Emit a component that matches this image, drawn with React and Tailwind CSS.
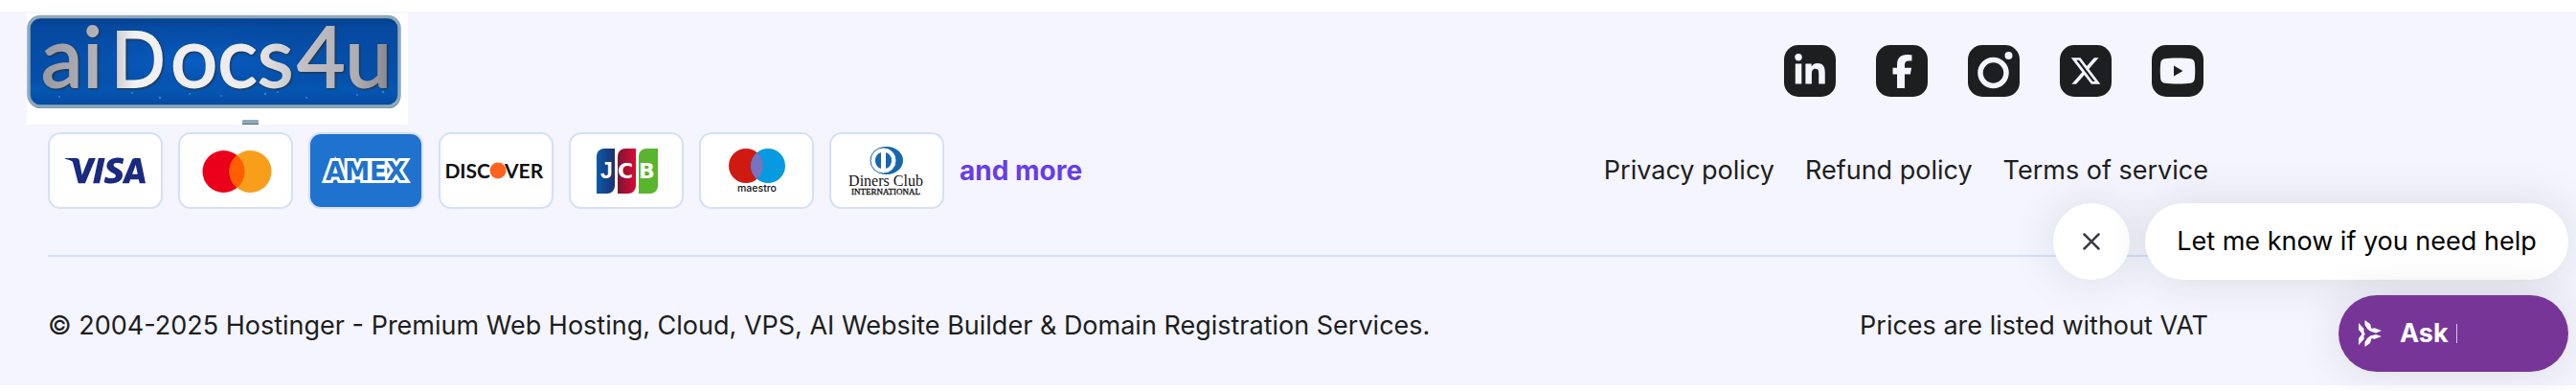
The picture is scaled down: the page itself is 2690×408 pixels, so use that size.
import React from "react";
import { FaLinkedinIn, FaFacebookF, FaXTwitter } from "react-icons/fa6";
import { SiVisa } from "react-icons/si";

function BrandLogo() {
  return (
    <svg viewBox="0 0 398 116" className="block h-[116px] w-[398px] overflow-visible" role="img" aria-label="aiDocs4u">
      <defs>
        <linearGradient id="panel" x1="0" y1="0" x2="0" y2="1">
          <stop offset="0" stopColor="#053f8a" />
          <stop offset="0.12" stopColor="#0649a0" />
          <stop offset="0.7" stopColor="#0450aa" />
          <stop offset="0.8" stopColor="#0558b4" />
          <stop offset="1" stopColor="#0549a0" />
        </linearGradient>
        <radialGradient id="glow" cx="0.45" cy="0.5" r="0.55">
          <stop offset="0" stopColor="#0a62cc" stopOpacity="0.8" />
          <stop offset="1" stopColor="#0649a0" stopOpacity="0" />
        </radialGradient>
        <linearGradient id="metal" gradientUnits="userSpaceOnUse" x1="18" y1="0" x2="380" y2="0">
          <stop offset="0" stopColor="#9a9aa2" />
          <stop offset="0.17" stopColor="#b5b6ba" />
          <stop offset="0.26" stopColor="#f1f1f2" />
          <stop offset="0.6" stopColor="#ececee" />
          <stop offset="0.75" stopColor="#bfbfc4" />
          <stop offset="0.9" stopColor="#aeaeb4" />
          <stop offset="1" stopColor="#85858d" />
        </linearGradient>
      </defs>
      <rect width="398" height="116" fill="#fff" />
      <rect x="2" y="4" width="388" height="95" rx="12" fill="#4d6070" />
      <rect x="2" y="3.5" width="387" height="93.500" rx="12" fill="url(#panel)" stroke="#8fa9b9" strokeWidth="3.500" />
      <rect x="5" y="6" width="381" height="88" rx="9" fill="url(#glow)" />
      <g fill="#5fa8ee" opacity="0.55">
        <circle cx="34" cy="87" r="1" />
        <circle cx="110" cy="83" r="1" />
        <circle cx="139" cy="88" r="1.200" />
        <circle cx="170" cy="84" r="1" />
        <circle cx="203" cy="86" r="1" />
        <circle cx="249" cy="84" r="1.200" />
        <circle cx="262" cy="82" r="1" />
        <circle cx="292" cy="88" r="1" />
        <circle cx="345" cy="85" r="1" />
        <circle cx="372" cy="82" r="1.200" />
      </g>
      <g
        fill="url(#metal)"
        stroke="url(#metal)"
        strokeWidth="1.800"
        fontSize="87"
        fontFamily='Lato, "Open Sans", sans-serif'
        className="[filter:drop-shadow(1px_1px_1px_#26303c)]"
      >
        <text x="15" y="77">ai</text>
        <text x="88" y="77" fontSize="80" fontFamily="Inter, sans-serif">D</text>
        <text x="150" y="77">ocs</text>
        <text x="282" y="77">4u</text>
      </g>
      <rect x="225" y="111" width="17" height="5" rx="1" fill="#8fa9b9" />
      <rect x="225" y="115" width="17" height="1" fill="#5a6d7c" />
    </svg>
  );
}

function Mastercard() {
  return (
    <svg viewBox="0 0 116 76" className="size-full" role="img" aria-label="Mastercard">
      <circle cx="45.500" cy="39" r="22" fill="#eb001b" />
      <circle cx="73.500" cy="39" r="22" fill="#f79e1b" />
      <path d="M59.500 22a22 22 0 0 1 0 34a22 22 0 0 1 0-34z" fill="#ff5f00" />
    </svg>
  );
}

function Amex() {
  return (
    <svg viewBox="0 0 116 76" className="size-full" role="img" aria-label="American Express">
      <rect width="116" height="76" rx="11" fill="#1f72cd" />
      <text
        x="58"
        y="48"
        textAnchor="middle"
        fontSize="26"
        fontWeight="700"
        fontFamily='"DejaVu Sans", sans-serif'
        fill="#1f72cd"
        stroke="#fff"
        strokeWidth="6"
        paintOrder="stroke"
      >
        AMEX
      </text>
    </svg>
  );
}

function Discover() {
  return (
    <svg viewBox="0 0 116 76" className="size-full" role="img" aria-label="Discover">
      <g fontSize="21" fontWeight="700" fontFamily="Lato, sans-serif" fill="#111">
        <text x="52" y="46" textAnchor="end">DISC</text>
        <text x="67" y="46">VER</text>
      </g>
      <circle cx="60" cy="38" r="8.500" fill="#ff6220" />
    </svg>
  );
}

function Jcb() {
  return (
    <svg viewBox="0 0 116 76" className="size-full" role="img" aria-label="JCB">
      <defs>
        <linearGradient id="jblue">
          <stop offset="0" stopColor="#0a5ba8" />
          <stop offset="1" stopColor="#1c2f74" />
        </linearGradient>
        <linearGradient id="jred">
          <stop offset="0" stopColor="#7a1632" />
          <stop offset="1" stopColor="#dc0a35" />
        </linearGradient>
      </defs>
      <path d="M35 15h11v39a8 8 0 0 1-8 8H27V23a8 8 0 0 1 8-8z" fill="url(#jblue)" />
      <path d="M57 15h11v39a8 8 0 0 1-8 8H49V23a8 8 0 0 1 8-8z" fill="url(#jred)" />
      <path d="M79 15h12v39a8 8 0 0 1-8 8H71V23a8 8 0 0 1 8-8z" fill="#5ab52e" />
      <g fontSize="22" fontWeight="700" fontFamily='"DejaVu Sans", sans-serif' fill="#fff">
        <text x="31" y="46" fontSize="23" fontFamily='"Liberation Sans", sans-serif'>J</text>
        <text x="49" y="46">C</text>
        <text x="71" y="46">B</text>
      </g>
    </svg>
  );
}

function Maestro() {
  return (
    <svg viewBox="0 0 116 76" className="size-full" role="img" aria-label="Maestro">
      <circle cx="47" cy="33" r="18" fill="#cf1a12" />
      <circle cx="70" cy="33" r="18" fill="#069be0" />
      <path d="M58.500 19.200a18 18 0 0 1 0 27.600a18 18 0 0 1 0-27.600z" fill="#7673c0" />
      <text x="58.500" y="60" textAnchor="middle" fontSize="10.500" fontWeight="500" fontFamily="Inter, sans-serif" fill="#111">
        maestro
      </text>
    </svg>
  );
}

function Diners() {
  return (
    <svg viewBox="0 0 116 76" className="size-full" role="img" aria-label="Diners Club International">
      <ellipse cx="58" cy="27.500" rx="17" ry="14.500" fill="#1668ad" />
      <circle cx="54.500" cy="27.500" r="13.500" fill="#fff" stroke="#1668ad" strokeWidth="1" />
      <path d="M52 19v17a9 9 0 0 1 0-17zM57 19v17a9 9 0 0 0 0-17z" fill="#1668ad" />
      <g textAnchor="middle" fontFamily='"Liberation Serif", serif' fill="#111">
        <text x="57" y="54" fontSize="16">Diners Club</text>
        <text x="57" y="63" fontSize="9" stroke="#111" strokeWidth="0.300">INTERNATIONAL</text>
      </g>
    </svg>
  );
}

function InstagramGlyph() {
  return (
    <svg viewBox="0 0 54 54" className="size-full" aria-hidden="true">
      <circle cx="26.500" cy="29" r="13.500" fill="none" stroke="#f4f5ff" strokeWidth="5.500" />
      <circle cx="42.500" cy="11" r="4" fill="#f4f5ff" />
    </svg>
  );
}

function YoutubeGlyph() {
  return (
    <svg viewBox="0 0 54 54" className="size-full" aria-hidden="true">
      <path
        d="M27 13.500c6 0 11 .2 13.500.7c2.600.5 4 2 4.300 4.500c.6 5 .6 11.500 0 16.500c-.3 2.500-1.700 4-4.300 4.500c-5 .9-22 .9-27 0c-2.600-.5-4-2-4.300-4.500c-.6-5-.6-11.500 0-16.500c.3-2.500 1.700-4 4.300-4.500c2.500-.5 7.500-.7 13.500-.7z"
        fill="#f4f5ff"
      />
      <path d="M23 21.500v11l9.500-5.500z" fill="#1d1e20" />
    </svg>
  );
}

const cards = [
  { name: "Visa", art: <SiVisa className="size-[84px] text-[#1a2a80]" aria-label="Visa" /> },
  { name: "Mastercard", art: <Mastercard /> },
  { name: "Amex", art: <Amex /> },
  { name: "Discover", art: <Discover /> },
  { name: "JCB", art: <Jcb /> },
  { name: "Maestro", art: <Maestro /> },
  { name: "Diners", art: <Diners /> },
];

const socials = [
  { name: "LinkedIn", art: <FaLinkedinIn className="size-[36px]" /> },
  { name: "Facebook", art: <FaFacebookF className="size-[35px]" /> },
  { name: "Instagram", art: <InstagramGlyph /> },
  { name: "X", art: <FaXTwitter className="size-[34px]" /> },
  { name: "YouTube", art: <YoutubeGlyph /> },
];

const policies = ["Privacy policy", "Refund policy", "Terms of service"];

function AskIcon() {
  return (
    <svg viewBox="0 0 24 28" className="h-[28px] w-[24px]" aria-hidden="true" fill="#fff">
      <path d="M0 3l5.500 6v4l1.500 1.500l-1.500 1.500v4L0 26v-7l3-3.500v-2L0 10z" />
      <path d="M6.500 0l5.500 4l1.500 5l3-.8l7.500 2.800l-6 2.500l-6-2l-3-2.500l-2.500-4z" />
      <path d="M6.500 28l5.500-4l1.500-5l3 .8l7.500-2.800l-6-2l-6 1.500l-3 2.500l-2.500 4z" />
    </svg>
  );
}

export default function App() {
  return (
    <div className="bg-white pt-[12px] pb-[6px] font-['Inter',sans-serif] text-[27px] leading-[40px] text-[#1d1e20]">
      <footer className="bg-[#f4f5ff] pt-[2px] pb-[42px]">
        <div className="flex items-start justify-between pl-[28px] pr-[384px]">
          <a href="#home"><BrandLogo /></a>
          <nav aria-label="Social media" className="flex gap-[32px] pt-[28px]">
            {socials.map((s) => (
              <a key={s.name} href={"#" + s.name} aria-label={s.name} className="flex size-[64px] items-center justify-center">
                <span className="flex size-[54px] items-center justify-center rounded-[15px] bg-[#1d1e20] text-[#f4f5ff]">{s.art}</span>
              </a>
            ))}
          </nav>
        </div>
        <div className="pl-[50px] pr-[384px]">
          <div className="mt-[8px] flex items-center justify-between border-b-2 border-[#d5dffb] pb-[48px]">
            <div className="flex items-center gap-[16px]">
              {cards.map((c) => (
                <div key={c.name} className="flex h-[80px] w-[120px] items-center justify-center rounded-[13px] border-2 border-[#d5dffb] bg-white">
                  {c.art}
                </div>
              ))}
              <a href="#payments" className="text-[28px] font-bold text-[#673de6]">and more</a>
            </div>
            <nav aria-label="Policies" className="flex gap-[32px]">
              {policies.map((p) => (
                <a key={p} href={"#" + p.split(" ")[0]}>{p}</a>
              ))}
            </nav>
          </div>
          <div className="flex items-center justify-between pt-[52px]">
            <p>© 2004-2025 Hostinger - Premium Web Hosting, Cloud, VPS, AI Website Builder &amp; Domain Registration Services.</p>
            <p>Prices are listed without VAT</p>
          </div>
        </div>
      </footer>
      <aside className="absolute top-[212px] right-[8px] flex flex-col items-end gap-[16px]">
        <div className="flex gap-[16px]">
          <button type="button" aria-label="Close" className="flex size-[80px] items-center justify-center rounded-full bg-white shadow-[0_0_48px_rgba(29,30,32,0.12)]">
            <svg viewBox="0 0 18 18" className="size-[18px]" fill="none" stroke="#3c3c4a" strokeWidth="2.500" strokeLinecap="round">
              <path d="M1.500 1.500l15 15M16.500 1.500l-15 15" />
            </svg>
          </button>
          <p className="flex h-[80px] w-[442px] items-center justify-center whitespace-nowrap rounded-full bg-white text-black shadow-[0_0_48px_rgba(29,30,32,0.12)]">
            Let me know if you need help
          </p>
        </div>
        <button type="button" className="flex h-[80px] w-[240px] items-center rounded-full bg-[#773697] pl-[21px] font-bold text-white shadow-[0_0_48px_rgba(29,30,32,0.12)]">
          <AskIcon />
          <span className="ml-[19px]">Ask</span>
          <span className="ml-[8px] h-[20px] w-px bg-[#d9c4e6]" />
        </button>
      </aside>
    </div>
  );
}
